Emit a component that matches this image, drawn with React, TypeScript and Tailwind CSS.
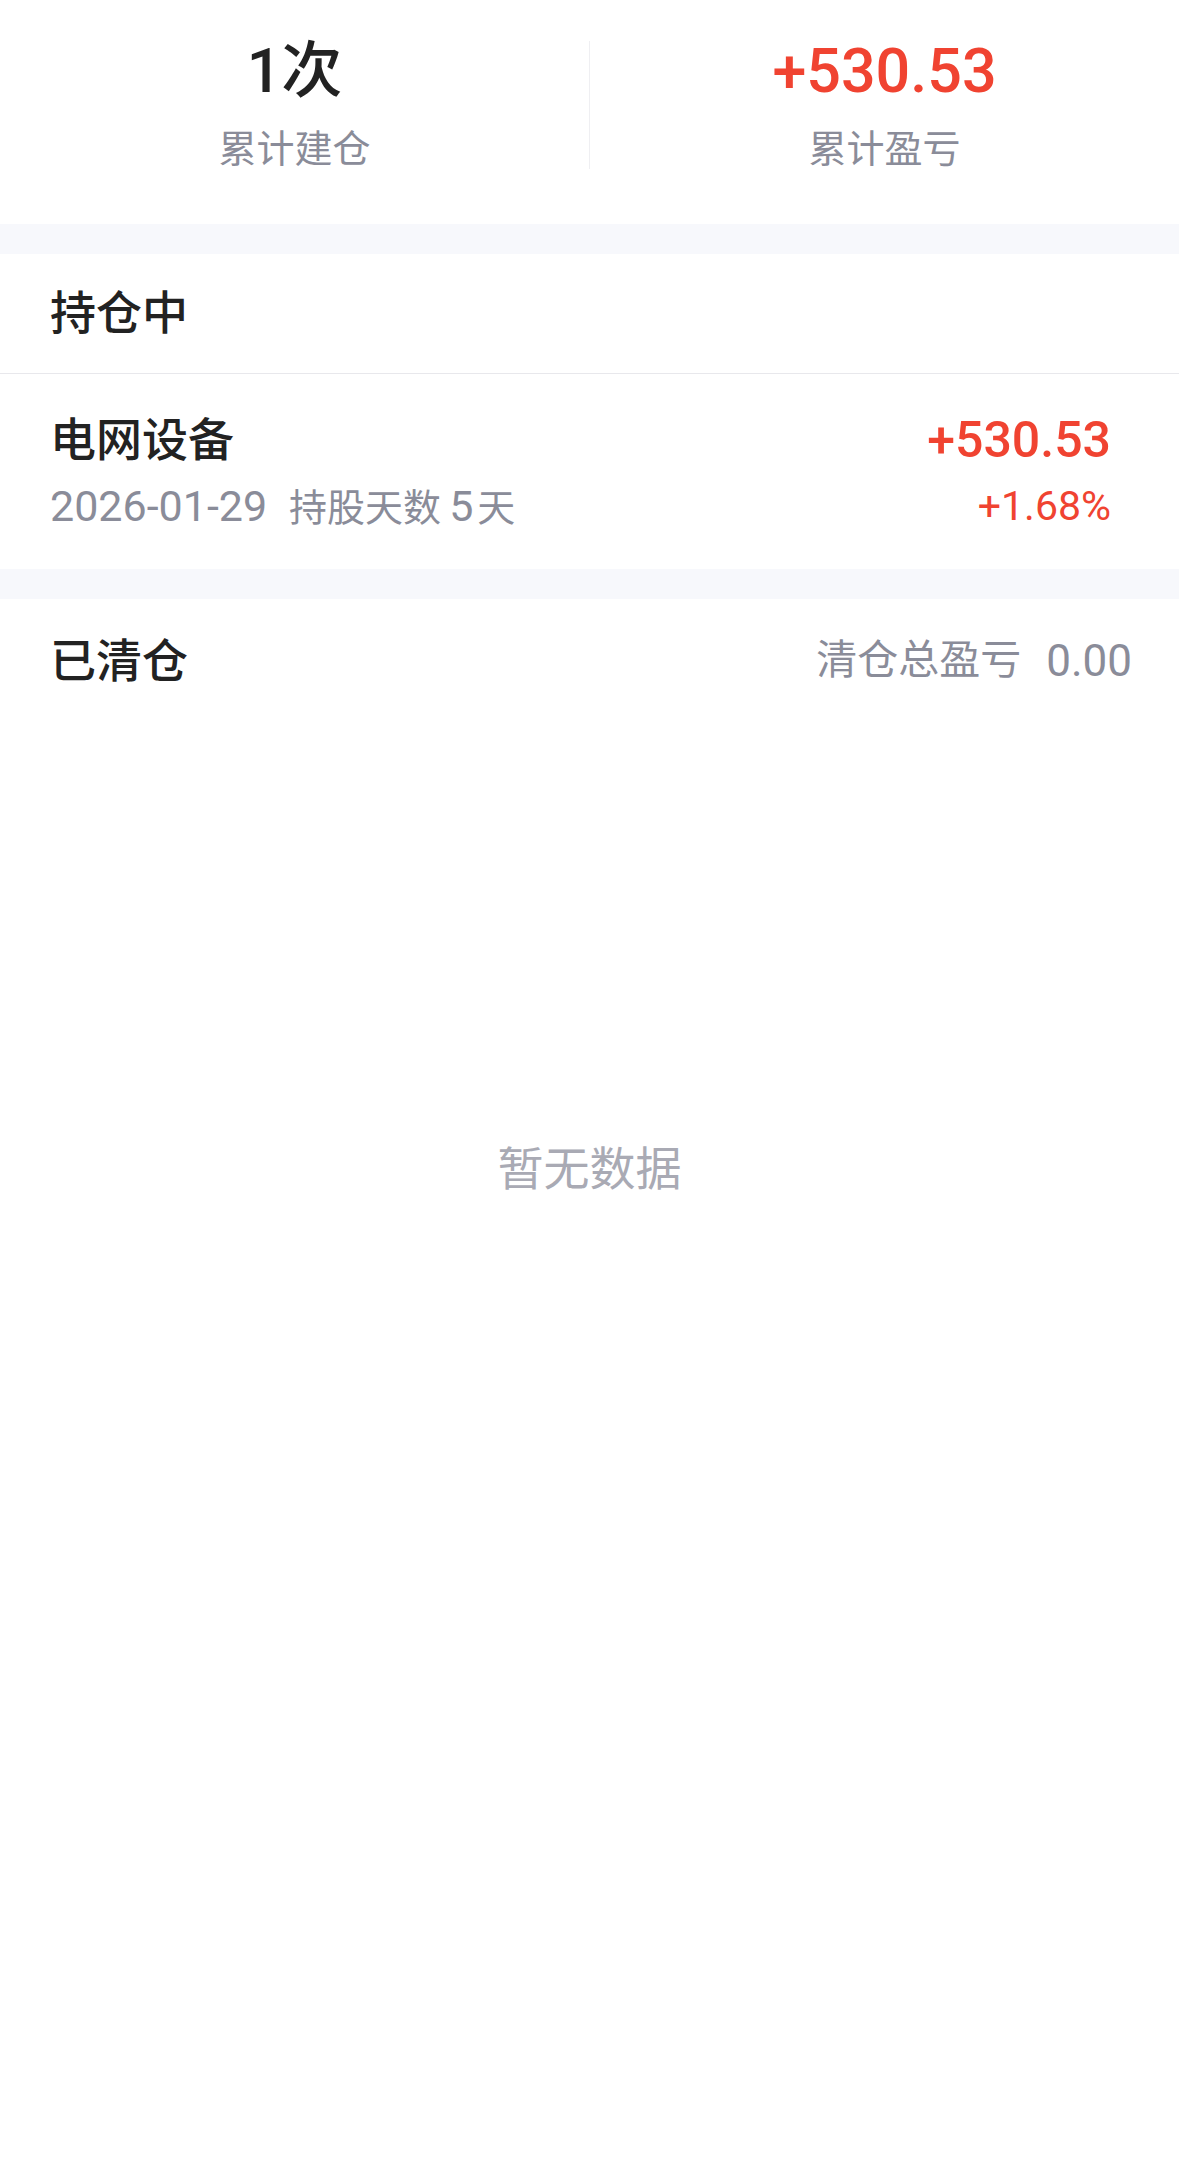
import React from 'react'

const font = { fontFamily: 'Roboto, "Noto Sans CJK SC", sans-serif' }

const Stat = ({ value, label, red }: { value: string; label: string; red?: boolean }) => (
  <div className="flex flex-1 flex-col items-center">
    <div className={`text-[61px] leading-[60px] font-medium ${red ? 'text-[#f04331]' : 'text-[#222222]'}`}>
      {value}
    </div>
    <div className="mt-[26px] text-[38px] leading-[44px] text-[#8a8c99]">{label}</div>
  </div>
)

export default function App() {
  return (
    <div className="w-[1179px] min-h-[2170px] bg-white" style={font}>
      {/* summary */}
      <div className="flex h-[224px] items-start pt-[41px]">
        <Stat value="1次" label="累计建仓" />
        <div className="h-[128px] w-px bg-[#efeff2]" />
        <Stat value="+530.53" label="累计盈亏" red />
      </div>

      <div className="h-[30px] bg-[#f7f8fc]" />

      {/* holding */}
      <div className="flex h-[120px] items-center border-b border-[#e8e8ec] px-[50px]">
        <span className="text-[46px] font-medium text-[#222222]">持仓中</span>
      </div>
      <div className="flex items-start justify-between px-[50px] pr-[68px] pt-[38px] pb-[39px]">
        <div className="flex flex-col">
          <span className="text-[46px] leading-[56px] font-medium text-[#222222]">电网设备</span>
          <span className="mt-[16px] text-[43px] leading-[44px] text-[#8a8c99]">
            2026-01-29
            <span className="ml-[22px] text-[38px]">持股天数</span>
            <span className="ml-[8px]">5</span>
            <span className="ml-[4px] text-[38px]">天</span>
          </span>
        </div>
        <div className="flex flex-col items-end">
          <span className="text-[50px] leading-[56px] font-medium text-[#f04331]">+530.53</span>
          <span className="mt-[16px] text-[41px] leading-[44px] text-[#f04331]">+1.68%</span>
        </div>
      </div>

      <div className="h-[30px] bg-[#f7f8fc]" />

      {/* cleared */}
      <div className="flex h-[124px] items-center justify-between pl-[50px] pr-[47px]">
        <span className="text-[46px] font-medium text-[#222222]">已清仓</span>
        <span className="flex items-center text-[41px] text-[#8a8c99]">
          清仓总盈亏<span className="ml-[25px] text-[44px]">0.00</span>
        </span>
      </div>

      <div className="flex justify-center pt-[418px]">
        <span className="text-[46px] leading-[56px] text-[#a9aab4]">暂无数据</span>
      </div>
    </div>
  )
}
